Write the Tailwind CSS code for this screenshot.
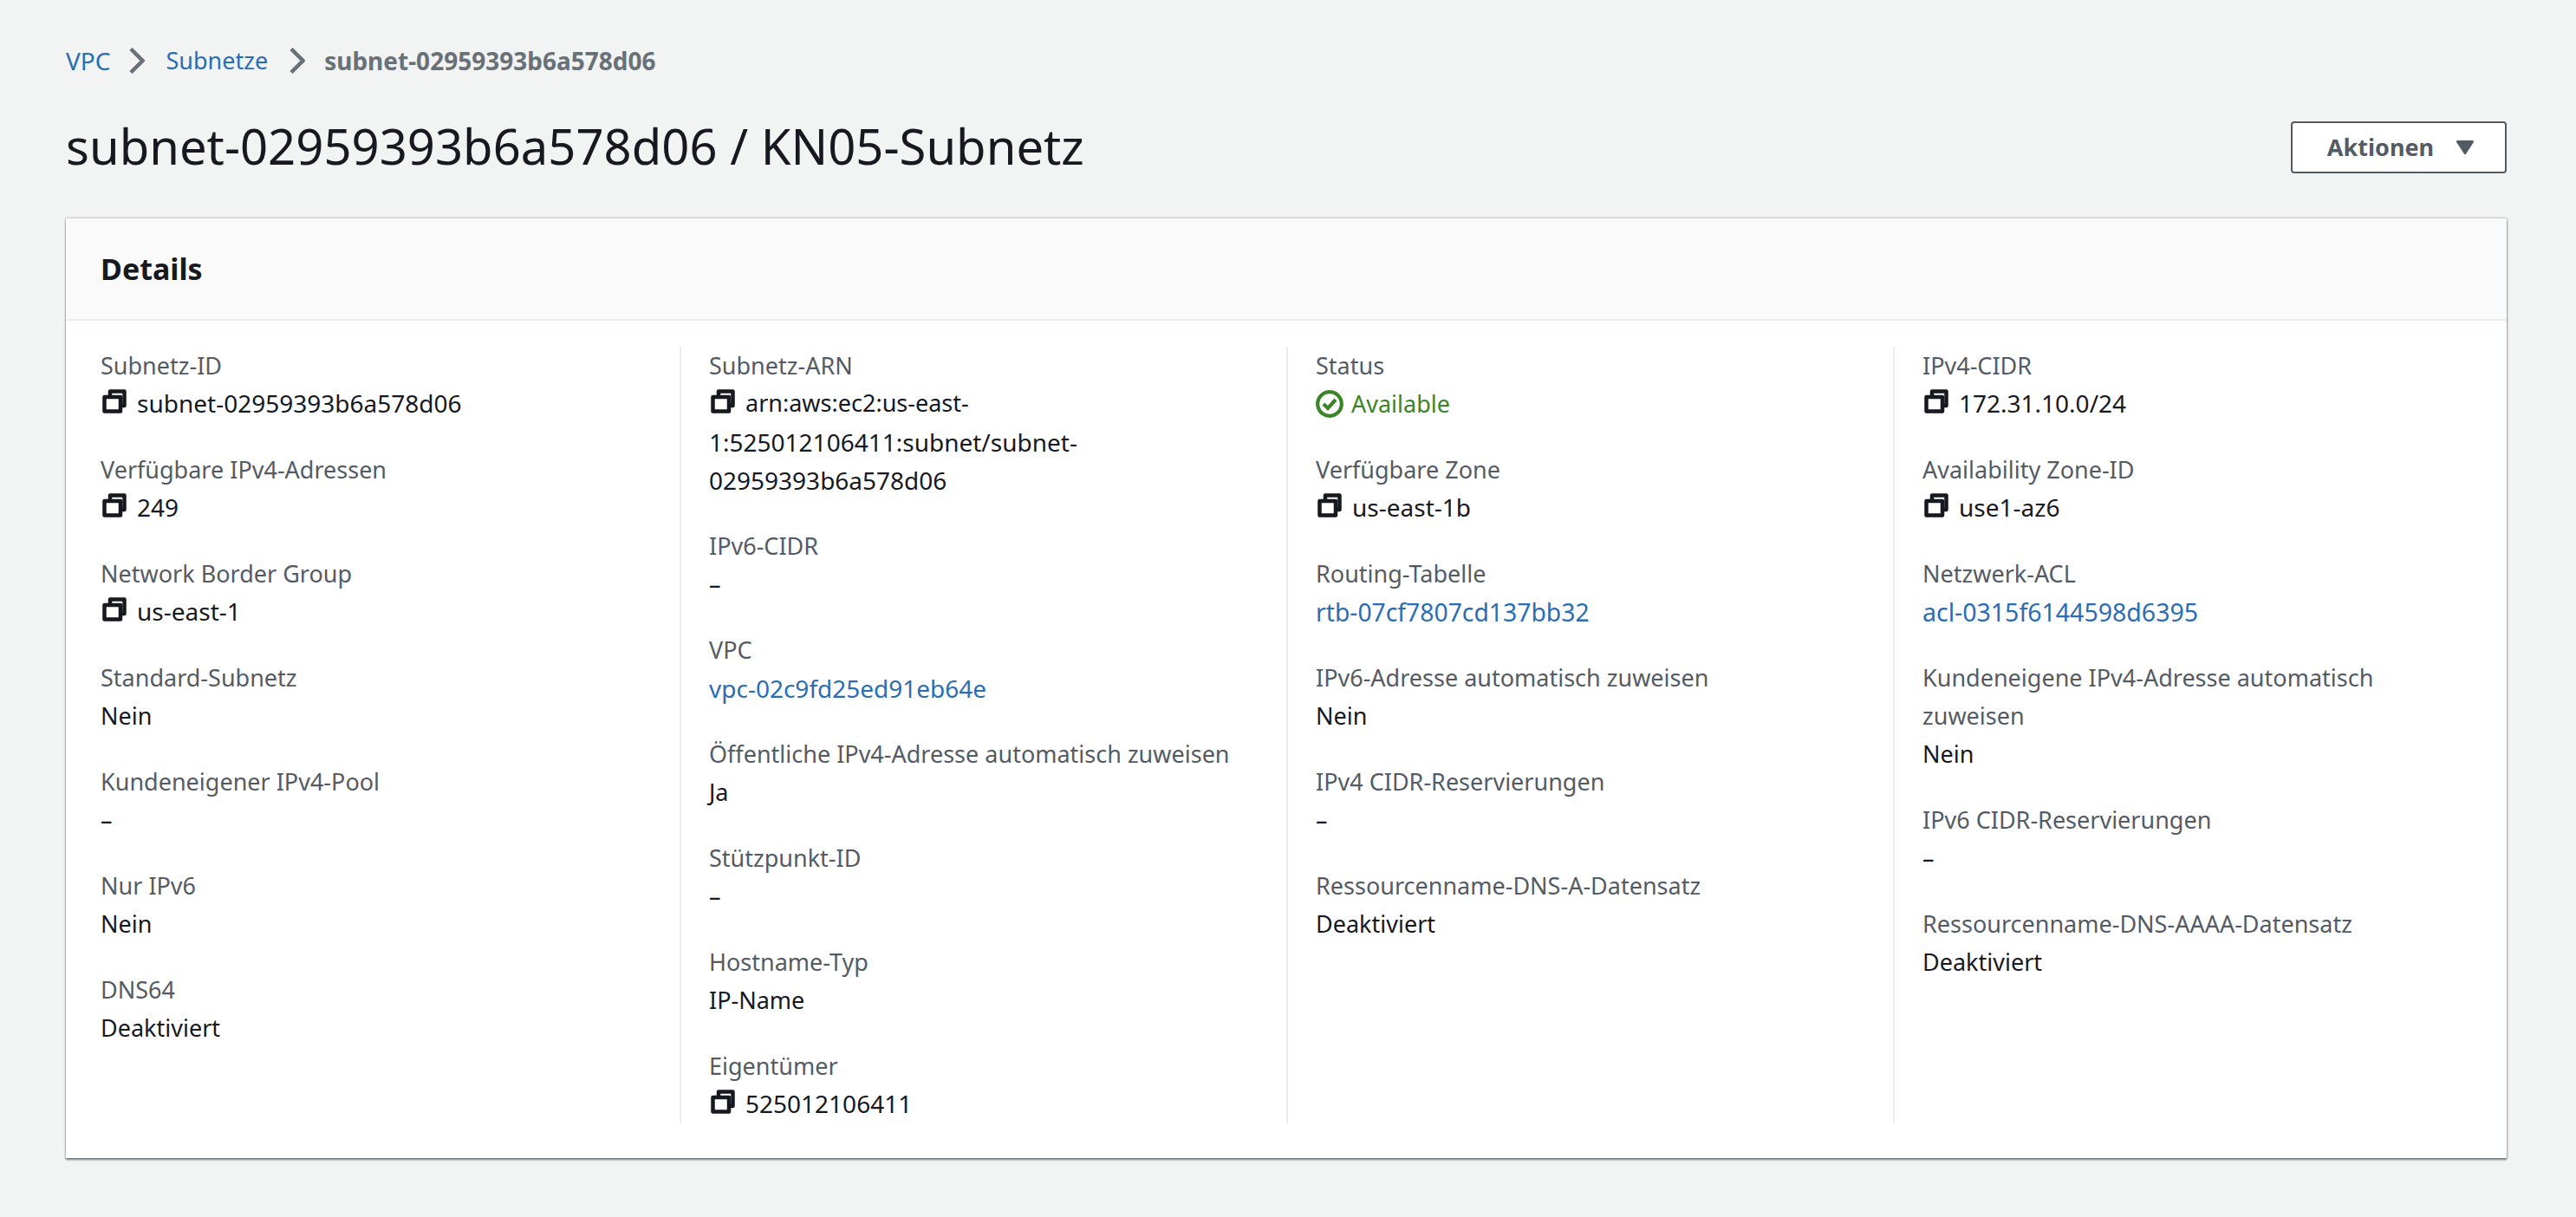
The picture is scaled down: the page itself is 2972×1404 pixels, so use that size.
<!DOCTYPE html>
<html lang="de">
  <head>
    <meta charset="UTF-8" />
    <title>subnet-02959393b6a578d06 / KN05-Subnetz</title>
    <script src="https://cdn.jsdelivr.net/npm/@tailwindcss/browser@4"></script>
  </head>
  <body class="bg-[#f2f3f3] text-[#16191f] font-['Noto_Sans',sans-serif] text-[28px] leading-[44px] min-h-[1404px]">
    <svg class="hidden">
      <symbol id="copy" viewBox="0 0 32 32">
        <path d="M11 9V2.5h16.5V19H23" fill="none" stroke="currentColor" stroke-width="4.5" stroke-linejoin="round" />
        <rect x="4.5" y="9" width="18.5" height="16.5" fill="none" stroke="currentColor" stroke-width="4.5" stroke-linejoin="round" />
      </symbol>
    </svg>

    <div class="pl-[76px] pr-[80px] pt-[48px]">
      <!-- breadcrumb -->
      <nav class="flex items-center h-[44px]">
        <a class="text-[#2a6db5]">VPC</a>
        <svg class="w-[18px] h-[30px] ml-[22px] mr-[24px] text-[#687078]" viewBox="0 0 18 30"><path d="M2 1.5L15.5 15 2 28.5" fill="none" stroke="currentColor" stroke-width="4.5" /></svg>
        <a class="text-[#2a6db5] text-[27px]">Subnetze</a>
        <svg class="w-[18px] h-[30px] ml-[25px] mr-[22px] text-[#687078]" viewBox="0 0 18 30"><path d="M2 1.5L15.5 15 2 28.5" fill="none" stroke="currentColor" stroke-width="4.5" /></svg>
        <span class="font-bold text-[#687078]">subnet-02959393b6a578d06</span>
      </nav>

      <!-- title -->
      <div class="flex items-center justify-between mt-[48px] h-[60px]">
        <h1 class="text-[56.2px] leading-[60px] pb-[4px]">subnet-02959393b6a578d06 / KN05-Subnetz</h1>
        <button class="flex items-center justify-center w-[249px] h-[60px] pl-[4px] bg-white border-2 border-[#545b64] rounded-[4px] font-bold text-[27px] text-[#545b64]">
          Aktionen
          <svg class="w-[20px] h-[16px] ml-[26px]" viewBox="0 0 20 16"><path d="M1.5 1.5h17L10 14.5z" fill="currentColor" stroke="currentColor" stroke-width="3" stroke-linejoin="round" /></svg>
        </button>
      </div>

      <!-- details card -->
      <section class="mt-[52px] bg-white shadow-[0_2px_2px_rgba(84,91,100,0.8),1px_0_2px_rgba(84,91,100,0.3),-1px_0_2px_rgba(84,91,100,0.2),0_-2px_2px_rgba(0,22,43,0.04)]">
        <header class="h-[118px] flex items-center px-[40px] bg-[#fafafa] border-b-2 border-[#eaeded]">
          <h2 class="text-[34px] font-bold">Details</h2>
        </header>
        <div class="grid grid-cols-4 px-[8px] pt-[30px] pb-[40px] text-[27px]">
          <div class="pl-[32px] flex flex-col gap-[32px]">
            <div><div class="text-[#545b64]">Subnetz-ID</div><div class="flex items-center h-[44px] pb-[2px] gap-[10px] text-[28px]"><svg class="w-[32px] h-[32px] shrink-0"><use href="#copy" /></svg>subnet-02959393b6a578d06</div></div>
            <div><div class="text-[#545b64]">Verfügbare IPv4-Adressen</div><div class="flex items-center h-[44px] pb-[2px] gap-[10px] text-[28px]"><svg class="w-[32px] h-[32px] shrink-0"><use href="#copy" /></svg>249</div></div>
            <div><div class="text-[#545b64]">Network Border Group</div><div class="flex items-center h-[44px] pb-[2px] gap-[10px] text-[28px]"><svg class="w-[32px] h-[32px] shrink-0"><use href="#copy" /></svg>us-east-1</div></div>
            <div><div class="text-[#545b64]">Standard-Subnetz</div><div>Nein</div></div>
            <div><div class="text-[#545b64]">Kundeneigener IPv4-Pool</div><div>–</div></div>
            <div><div class="text-[#545b64]">Nur IPv6</div><div>Nein</div></div>
            <div><div class="text-[#545b64]">DNS64</div><div>Deaktiviert</div></div>
          </div>
          <div class="pl-[32px] border-l-2 border-[#eaeded] flex flex-col gap-[32px]">
            <div>
              <div class="text-[#545b64]">Subnetz-ARN</div>
              <div class="flex items-center h-[44px] pb-[2px] gap-[10px]"><svg class="w-[32px] h-[32px] shrink-0"><use href="#copy" /></svg>arn:aws:ec2:us-east-</div>
              <div class="text-[28px]">1:525012106411:subnet/subnet-</div>
              <div class="text-[28px]">02959393b6a578d06</div>
            </div>
            <div><div class="text-[#545b64]">IPv6-CIDR</div><div>–</div></div>
            <div><div class="text-[#545b64]">VPC</div><a class="block text-[#2a6db5] text-[28px]">vpc-02c9fd25ed91eb64e</a></div>
            <div><div class="text-[#545b64]">Öffentliche IPv4-Adresse automatisch zuweisen</div><div>Ja</div></div>
            <div><div class="text-[#545b64]">Stützpunkt-ID</div><div>–</div></div>
            <div><div class="text-[#545b64]">Hostname-Typ</div><div>IP-Name</div></div>
            <div><div class="text-[#545b64]">Eigentümer</div><div class="flex items-center h-[44px] pb-[2px] gap-[10px] text-[28px]"><svg class="w-[32px] h-[32px] shrink-0"><use href="#copy" /></svg>525012106411</div></div>
          </div>
          <div class="pl-[32px] border-l-2 border-[#eaeded] flex flex-col gap-[32px]">
            <div><div class="text-[#545b64]">Status</div><div class="flex items-center gap-[9px] text-[#3b8526]"><svg class="w-[32px] h-[32px] shrink-0" viewBox="0 0 32 32"><circle cx="16" cy="16" r="13.8" fill="none" stroke="currentColor" stroke-width="4.2" /><path d="M9 16l5 5 9-10" fill="none" stroke="currentColor" stroke-width="4.2" /></svg>Available</div></div>
            <div><div class="text-[#545b64]">Verfügbare Zone</div><div class="flex items-center h-[44px] pb-[2px] gap-[10px] text-[28px]"><svg class="w-[32px] h-[32px] shrink-0"><use href="#copy" /></svg>us-east-1b</div></div>
            <div><div class="text-[#545b64]">Routing-Tabelle</div><a class="block text-[#2a6db5] text-[28.3px]">rtb-07cf7807cd137bb32</a></div>
            <div><div class="text-[#545b64]">IPv6-Adresse automatisch zuweisen</div><div>Nein</div></div>
            <div><div class="text-[#545b64]">IPv4 CIDR-Reservierungen</div><div>–</div></div>
            <div><div class="text-[#545b64]">Ressourcenname-DNS-A-Datensatz</div><div>Deaktiviert</div></div>
          </div>
          <div class="pl-[32px] border-l-2 border-[#eaeded] flex flex-col gap-[32px]">
            <div><div class="text-[#545b64]">IPv4-CIDR</div><div class="flex items-center h-[44px] pb-[2px] gap-[10px] text-[28px]"><svg class="w-[32px] h-[32px] shrink-0"><use href="#copy" /></svg>172.31.10.0/24</div></div>
            <div><div class="text-[#545b64]">Availability Zone-ID</div><div class="flex items-center h-[44px] pb-[2px] gap-[10px] text-[28px]"><svg class="w-[32px] h-[32px] shrink-0"><use href="#copy" /></svg>use1-az6</div></div>
            <div><div class="text-[#545b64]">Netzwerk-ACL</div><a class="block text-[#2a6db5] text-[28.5px]">acl-0315f6144598d6395</a></div>
            <div><div class="text-[#545b64]">Kundeneigene IPv4-Adresse automatisch<br />zuweisen</div><div>Nein</div></div>
            <div><div class="text-[#545b64]">IPv6 CIDR-Reservierungen</div><div>–</div></div>
            <div><div class="text-[#545b64]">Ressourcenname-DNS-AAAA-Datensatz</div><div>Deaktiviert</div></div>
          </div>
        </div>
      </section>
    </div>
  </body>
</html>
